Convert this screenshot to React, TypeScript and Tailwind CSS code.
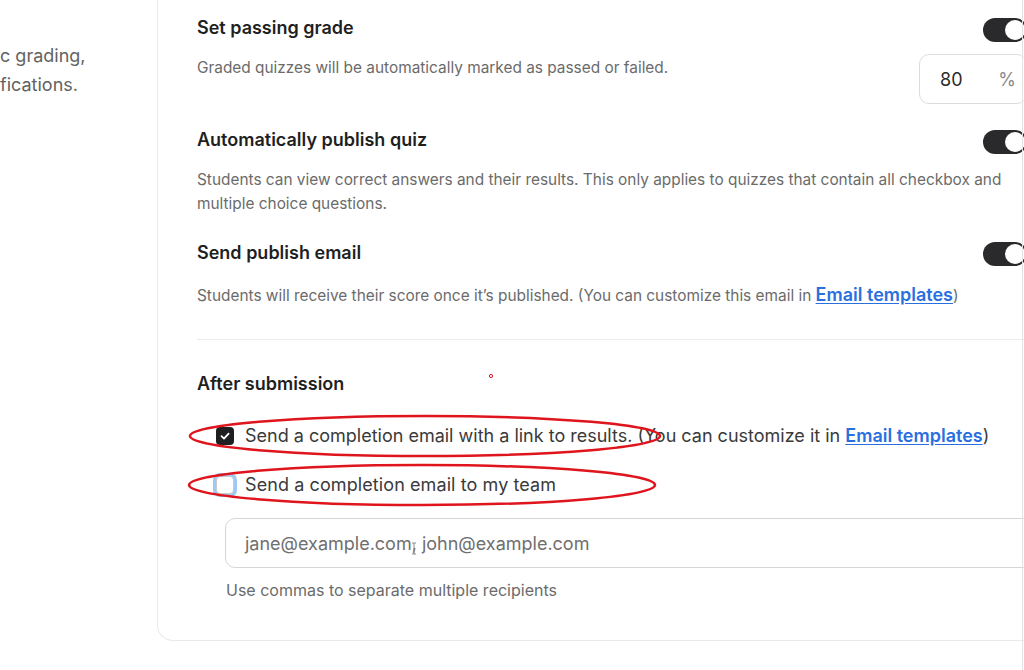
import React from 'react';

const font = { fontFamily: 'Inter, "Noto Sans", sans-serif' };

function Toggle() {
  return (
    <div className="relative h-6 w-[44px] shrink-0 rounded-full bg-[#2a2a2c]">
      <div className="absolute right-[2px] top-[2px] h-5 w-5 rounded-full bg-white" />
    </div>
  );
}

function EmailLink() {
  return (
    <span className="text-[18px] font-semibold text-[#2a6fe0] underline underline-offset-2">Email templates</span>
  );
}

export default function App() {
  return (
    <div className="relative h-[670px] w-[1024px] overflow-hidden bg-white" style={font}>
      <div className="flex">
        {/* left description column, cut off by the viewport */}
        <div className="w-[157px] shrink-0 pt-[41px] text-[18px] leading-[29px] text-[#626262]">
          <div>c grading,</div>
          <div>fications.</div>
        </div>

        {/* settings card */}
        <div className="w-[920px] shrink-0 rounded-bl-2xl border-b border-l border-[#e9e9e9] pb-[40px] pl-[39px] pr-[50px]">
          {/* passing grade */}
          <div className="flex justify-between pt-[14px]">
            <div>
              <div className="text-[18px] font-semibold leading-[28px] text-[#1f1f1f]">Set passing grade</div>
              <div className="mt-[14px] text-[15.4px] leading-[24px] text-[#6b6b6b]">
                Graded quizzes will be automatically marked as passed or failed.
              </div>
            </div>
            <div className="flex flex-col items-end">
              <div className="mt-[4px]"><Toggle /></div>
              <div className="mt-[12px] flex h-[50px] w-[108px] items-center justify-between rounded-[10px] border border-[#dcdcdc] pl-[20px] pr-[10px] text-[18px]">
                <span className="text-[#2b2b2b]">80</span>
                <span className="text-[#8a8a8a]">%</span>
              </div>
            </div>
          </div>

          {/* auto publish */}
          <div className="mt-[22px] flex items-start justify-between">
            <div className="text-[18px] font-semibold leading-[28px] text-[#1f1f1f]">Automatically publish quiz</div>
            <div className="mt-[4px]"><Toggle /></div>
          </div>
          <div className="mt-[14px] whitespace-nowrap text-[15.4px] leading-[24px] text-[#6b6b6b]">
            Students can view correct answers and their results. This only applies to quizzes that contain all checkbox and
            <br />
            multiple choice questions.
          </div>

          {/* publish email */}
          <div className="mt-[23px] flex items-start justify-between">
            <div className="text-[18px] font-semibold leading-[28px] text-[#1f1f1f]">Send publish email</div>
            <div className="mt-[3px]"><Toggle /></div>
          </div>
          <div className="mt-[16px] whitespace-nowrap text-[15.4px] leading-[24px] text-[#6b6b6b]">
            Students will receive their score once it’s published. (You can customize this email in <EmailLink />)
          </div>

          <div className="mt-[31px] border-t border-[#ececec]" />

          {/* after submission */}
          <div className="mt-[30px] text-[18px] font-semibold leading-[28px] text-[#1f1f1f]">After submission</div>

          <div className="mt-[24px] flex items-center whitespace-nowrap pl-[19px] text-[18px] leading-[28px] text-[#3a3a3a]">
            <div className="mr-[11px] flex h-[18px] w-[18px] shrink-0 items-center justify-center rounded-[4px] bg-[#1f1f21]">
              <svg width="12" height="12" viewBox="0 0 12 12" fill="none">
                <path d="M2.5 6.2 5 8.6 9.6 3.6" stroke="white" strokeWidth="1.8" strokeLinecap="round" strokeLinejoin="round" />
              </svg>
            </div>
            <span>
              Send a completion email with a link to results. (You can customize it in <EmailLink />)
            </span>
          </div>

          <div className="mt-[21px] flex items-center pl-[19px] text-[18px] leading-[28px] tracking-[0.005em] text-[#3a3a3a]">
            <div className="mr-[11px] h-[18px] w-[18px] shrink-0 rounded-[4px] border border-[#c9c9c9] bg-white ring-[3px] ring-[#9cc9f5]" />
            <span>Send a completion email to my team</span>
          </div>

          <div className="-mr-[60px] ml-[28px] mt-[19px] flex h-[50px] items-center rounded-[10px] border border-[#d6d6d6] pl-[19px] text-[18px] text-[#6f6f6f]">
            jane@example.com, john@example.com
          </div>

          <div className="ml-[29px] mt-[12px] text-[16px] leading-[20px] text-[#6b6b6b]">
            Use commas to separate multiple recipients
          </div>
        </div>
      </div>

      {/* right window edge */}
      <div className="absolute right-[1px] top-0 h-full w-px bg-[#e4e4e4]" />

      {/* red annotation marks */}
      <svg className="pointer-events-none absolute left-0 top-0" width="1024" height="670">
        <ellipse cx="425" cy="436" rx="235" ry="20" fill="none" stroke="#e0141c" strokeWidth="2.5" />
        <ellipse cx="422" cy="485" rx="233" ry="20" fill="none" stroke="#e0141c" strokeWidth="2.5" />
        <circle cx="491" cy="376" r="1.6" fill="none" stroke="#e0141c" strokeWidth="1" />
        <path d="M412 543h4M414 543v11M412 554h4" stroke="#8a8a8a" strokeWidth="1" fill="none" />
      </svg>
    </div>
  );
}
